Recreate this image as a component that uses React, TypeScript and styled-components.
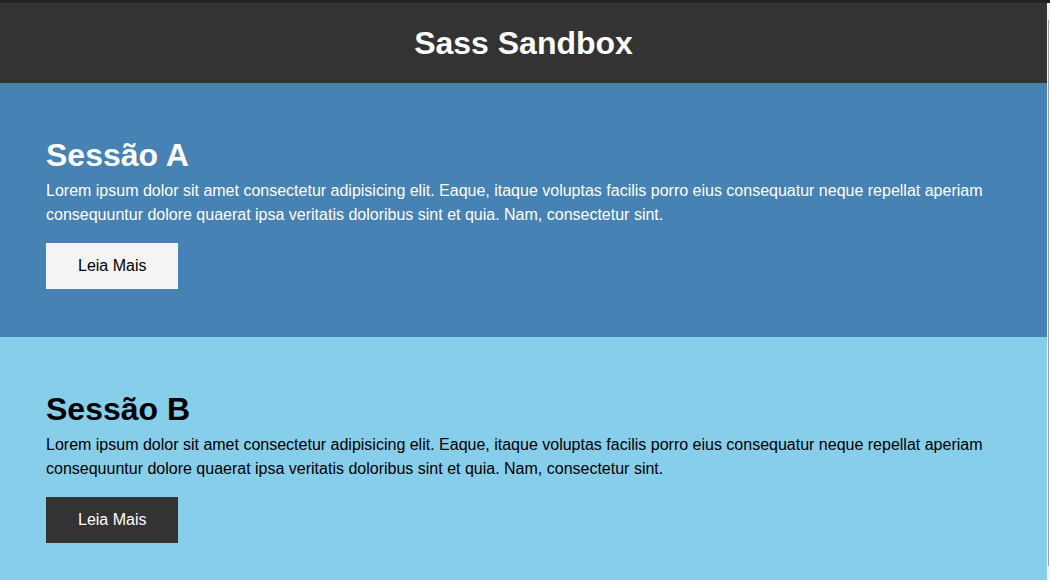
import React from 'react';
import styled, { createGlobalStyle } from 'styled-components';

const GlobalStyle = createGlobalStyle`
  * {
    box-sizing: border-box;
  }

  body {
    margin: 0;
    border-top: 3px solid #222222;
    font-family: 'Liberation Sans', Arial, sans-serif;
    font-size: 16px;
    line-height: 1.5;
    background: #87ceeb;
  }
`;

const Page = styled.div`
  margin-right: 3px;
`;

// thin overlay scrollbar seen at the right edge of the window
const ScrollTrack = styled.div`
  position: fixed;
  top: 3px;
  right: 0;
  bottom: 0;
  width: 3px;
  background: #f4f4f4;

  &::after {
    content: '';
    position: absolute;
    top: 17px;
    bottom: 14px;
    left: 1px;
    width: 1px;
    background: #a3a3a3;
  }
`;

const Header = styled.header`
  background-color: #333333;
  padding: 16px 0;
  text-align: center;
`;

const Title = styled.h1`
  margin: 0;
  color: #ffffff;
  font-size: 32px;
  font-weight: bold;
`;

interface SectionProps {
  variant: 'dark' | 'light';
}

const Section = styled.section<SectionProps>`
  padding: 48px 46px;
  background-color: ${(props) => (props.variant === 'dark' ? '#4682b4' : '#87ceeb')};
  color: ${(props) => (props.variant === 'dark' ? '#ffffff' : '#000000')};
`;

const Heading = styled.h2`
  margin: 0;
  font-size: 32px;
  font-weight: bold;
`;

const Text = styled.p`
  margin: 0 0 16px;
`;

const Button = styled.a<SectionProps>`
  display: inline-block;
  padding: 11px 32px;
  text-decoration: none;
  cursor: pointer;
  background-color: ${(props) => (props.variant === 'dark' ? '#f4f4f4' : '#333333')};
  color: ${(props) => (props.variant === 'dark' ? '#000000' : '#ffffff')};
`;

const lorem =
  'Lorem ipsum dolor sit amet consectetur adipisicing elit. Eaque, itaque voluptas facilis porro eius consequatur neque repellat aperiam consequuntur dolore quaerat ipsa veritatis doloribus sint et quia. Nam, consectetur sint.';

const sections: { title: string; variant: 'dark' | 'light' }[] = [
  { title: 'Sessão A', variant: 'dark' },
  { title: 'Sessão B', variant: 'light' },
];

const App: React.FC = () => {
  return (
    <Page>
      <GlobalStyle />
      <Header>
        <Title>Sass Sandbox</Title>
      </Header>
      {sections.map((s) => (
        <Section key={s.title} variant={s.variant}>
          <Heading>{s.title}</Heading>
          <Text>{lorem}</Text>
          <Button variant={s.variant}>Leia Mais</Button>
        </Section>
      ))}
      <ScrollTrack />
    </Page>
  );
};

export default App;
